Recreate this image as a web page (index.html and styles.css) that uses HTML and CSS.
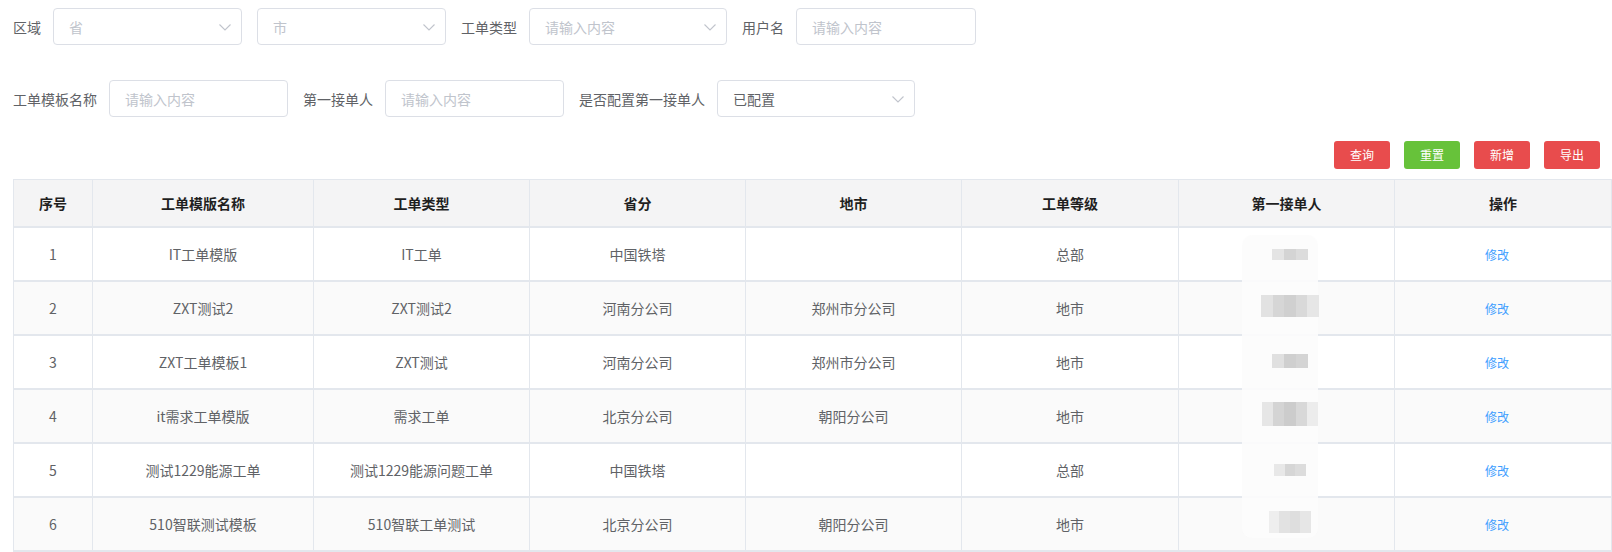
FILE: index.html
```html
<!DOCTYPE html>
<html lang="zh-CN">
<head>
<meta charset="utf-8">
<title>工单模板</title>
<link rel="stylesheet" href="styles.css">
</head>
<body>
<div class="page">
  <div class="form-row">
    <label class="lbl">区域</label>
    <div class="ctrl w189 select"><span class="ph">省</span><svg class="arrow" viewBox="0 0 12 7"><path d="M0.5 0.5 L6 6 L11.5 0.5" /></svg></div>
    <div class="ctrl w189 select"><span class="ph">市</span><svg class="arrow" viewBox="0 0 12 7"><path d="M0.5 0.5 L6 6 L11.5 0.5" /></svg></div>
    <label class="lbl">工单类型</label>
    <div class="ctrl w198 select"><span class="ph">请输入内容</span><svg class="arrow" viewBox="0 0 12 7"><path d="M0.5 0.5 L6 6 L11.5 0.5" /></svg></div>
    <label class="lbl">用户名</label>
    <div class="ctrl w180"><span class="ph">请输入内容</span></div>
  </div>
  <div class="form-row row2">
    <label class="lbl">工单模板名称</label>
    <div class="ctrl w179"><span class="ph">请输入内容</span></div>
    <label class="lbl">第一接单人</label>
    <div class="ctrl w179"><span class="ph">请输入内容</span></div>
    <label class="lbl">是否配置第一接单人</label>
    <div class="ctrl w198 select"><span class="val">已配置</span><svg class="arrow" viewBox="0 0 12 7"><path d="M0.5 0.5 L6 6 L11.5 0.5" /></svg></div>
  </div>
  <div class="toolbar">
    <button class="btn red">查询</button>
    <button class="btn green">重置</button>
    <button class="btn red">新增</button>
    <button class="btn red">导出</button>
  </div>
  <div class="table-wrap">
    <table class="grid">
      <colgroup>
        <col class="c0"><col class="c1"><col class="c2"><col class="c3"><col class="c4"><col class="c5"><col class="c6"><col class="c7">
      </colgroup>
      <thead>
        <tr><th>序号</th><th>工单模版名称</th><th>工单类型</th><th>省分</th><th>地市</th><th>工单等级</th><th>第一接单人</th><th>操作</th></tr>
      </thead>
      <tbody>
        <tr><td>1</td><td>IT工单模版</td><td>IT工单</td><td>中国铁塔</td><td></td><td>总部</td><td><span class="blur b1"></span></td><td><a class="link">修改</a></td></tr>
        <tr><td>2</td><td>ZXT测试2</td><td>ZXT测试2</td><td>河南分公司</td><td>郑州市分公司</td><td>地市</td><td><span class="blur b2"></span></td><td><a class="link">修改</a></td></tr>
        <tr><td>3</td><td>ZXT工单模板1</td><td>ZXT测试</td><td>河南分公司</td><td>郑州市分公司</td><td>地市</td><td><span class="blur b3"></span></td><td><a class="link">修改</a></td></tr>
        <tr><td>4</td><td>it需求工单模版</td><td>需求工单</td><td>北京分公司</td><td>朝阳分公司</td><td>地市</td><td><span class="blur b4"></span></td><td><a class="link">修改</a></td></tr>
        <tr><td>5</td><td>测试1229能源工单</td><td>测试1229能源问题工单</td><td>中国铁塔</td><td></td><td>总部</td><td><span class="blur b5"></span></td><td><a class="link">修改</a></td></tr>
        <tr><td>6</td><td>510智联测试模板</td><td>510智联工单测试</td><td>北京分公司</td><td>朝阳分公司</td><td>地市</td><td><span class="blur b6"></span></td><td><a class="link">修改</a></td></tr>
      </tbody>
    </table>
    <div class="smear"></div>
  </div>
</div>
</body>
</html>
```
FILE: styles.css
```css
* { box-sizing: border-box; }
html, body { margin: 0; padding: 0; background: #fff; }
body {
  font-family: "Noto Sans CJK SC", "Noto Sans", sans-serif;
  font-size: 14px;
  color: #606266;
}
.page { padding: 8px 0 0 13px; }

.form-row {
  display: flex;
  align-items: center;
  height: 37px;
}
.row2 { margin-top: 35px; }
.lbl {
  color: #606266;
  font-size: 14px;
  line-height: 20px;
  margin-right: 12px;
  white-space: nowrap;
}
.ctrl {
  height: 37px;
  border: 1px solid #dcdfe6;
  border-radius: 4px;
  margin-right: 15px;
  padding: 0 15px;
  display: flex;
  align-items: center;
  position: relative;
  background: #fff;
}
.w189 { width: 189px; }
.w198 { width: 198px; }
.w180 { width: 180px; }
.w179 { width: 179px; }
.ph { color: #c0c4cc; font-size: 14px; line-height: 20px; }
.val { color: #606266; font-size: 14px; line-height: 20px; }
.arrow {
  position: absolute;
  right: 10px;
  top: 15px;
  width: 12px;
  height: 7px;
  fill: none;
  stroke: #c0c4cc;
  stroke-width: 1.1;
}

.toolbar {
  display: flex;
  justify-content: flex-end;
  gap: 14px;
  margin-top: 24px;
  padding-right: 12px;
}
.btn {
  width: 56px;
  height: 28px;
  border: none;
  border-radius: 3px;
  color: #fff;
  font-family: inherit;
  font-size: 12px;
  line-height: 28px;
  padding: 0;
}
.red { background: #e84c4d; }
.green { background: #67c23a; }

.table-wrap {
  position: relative;
  margin-top: 10px;
  width: 1598px;
}
.grid {
  width: 1598px;
  table-layout: fixed;
  border-collapse: separate;
  border-spacing: 0;
  border-top: 1px solid #e3e7ed;
  border-left: 1px solid #e3e7ed;
}
.c0 { width: 79px; }
.c1 { width: 221px; }
.c2 { width: 216px; }
.c3 { width: 216px; }
.c4 { width: 216px; }
.c5 { width: 217px; }
.c6 { width: 216px; }
.c7 { width: 217px; }
.grid th, .grid td {
  padding: 0;
  text-align: center;
  vertical-align: middle;
  border-right: 1px solid #e3e7ed;
  border-bottom: 2px solid #e3e7ed;
  white-space: nowrap;
}
.grid th {
  height: 48px;
  background: #f4f4f5;
  color: #1f1f1f;
  font-weight: bold;
  font-size: 14px;
}
.grid td {
  height: 54px;
  color: #606266;
  font-size: 14px;
}
.grid tbody tr:nth-child(even) td { background: #fafafa; }
.link { color: #409eff; font-size: 12px; cursor: pointer; margin-right: 12px; }

.blur {
  display: inline-block;
  position: relative;
  z-index: 2;
  height: 12px;
  width: 36px;
  margin-left: 6px;
  background: linear-gradient(90deg, #e4e4e4 0 33%, #d4d4d4 33% 66%, #dcdcdc 66%);
}
.b1 { width: 36px; height: 11px; }
.b2 { width: 58px; height: 22px; background: linear-gradient(90deg, #e2e2e2 0 20%, #d6d6d6 20% 40%, #d0d0d0 40% 60%, #d9d9d9 60% 80%, #e6e6e6 80%); }
.b3 { width: 36px; height: 14px; background: linear-gradient(90deg, #e0e0e0 0 33%, #cfcfcf 33% 66%, #d4d4d4 66%); }
.b4 { width: 56px; height: 24px; background: linear-gradient(90deg, #e6e6e6 0 20%, #d4d4d4 20% 40%, #cccccc 40% 60%, #d8d8d8 60% 80%, #ececec 80%); }
.b5 { width: 32px; height: 12px; background: linear-gradient(90deg, #e8e8e8 0 33%, #d6d6d6 33% 66%, #dcdcdc 66%); }
.b6 { width: 42px; height: 22px; background: linear-gradient(90deg, #eeeeee 0 25%, #e2e2e2 25% 50%, #dedede 50% 75%, #e6e6e6 75%); }

.smear {
  position: absolute;
  left: 1229px;
  top: 56px;
  width: 76px;
  height: 303px;
  background: rgba(252, 252, 252, 0.92);
  border-radius: 10px;
  z-index: 1;
}
```
